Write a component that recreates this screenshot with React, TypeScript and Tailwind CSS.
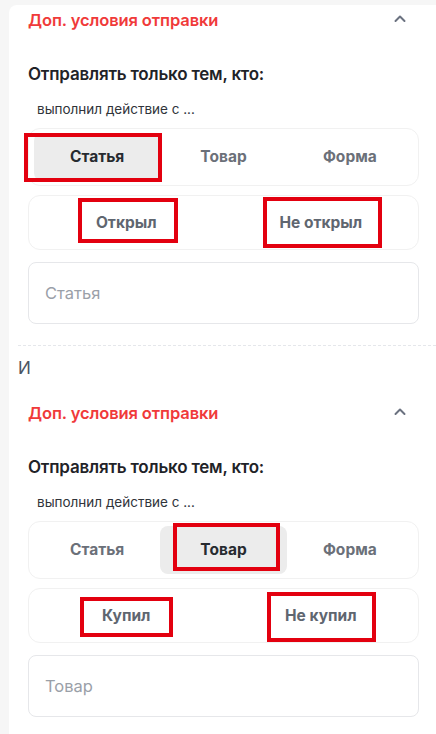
import React from "react";

const font = { fontFamily: "Inter, 'Noto Sans', sans-serif" };

function Chevron() {
  return (
    <svg width="14" height="14" viewBox="0 0 14 14" fill="none">
      <path d="M2.5 9 L7 4.5 L11.5 9" stroke="#6b7280" strokeWidth="2" strokeLinecap="round" strokeLinejoin="round" />
    </svg>
  );
}

type Box = { left: number; top: number; w: number; h: number };

function RedBox({ b }: { b: Box }) {
  return (
    <div
      className="absolute border-[4px] border-[#e3000f] pointer-events-none"
      style={{ left: b.left, top: b.top, width: b.w, height: b.h }}
    />
  );
}

function Section({
  selected,
  actions,
  placeholder,
  tabBox,
  actBoxes,
}: {
  selected: number;
  actions: [string, string];
  placeholder: string;
  tabBox: Box;
  actBoxes: [Box, Box];
}) {
  const tabs = ["Статья", "Товар", "Форма"];
  return (
    <div className="pl-[19px] pr-[17px]">
      <div className="h-[30px] flex items-center justify-between">
        <span className="text-[16.5px] font-semibold text-[#f03a3a] tracking-[-0.1px]">Доп. условия отправки</span>
        <span className="mr-[12px] mt-[-2px]">
          <Chevron />
        </span>
      </div>
      <div className="mt-[28px] leading-[22px] text-[17px] font-semibold text-[#1f2328] tracking-[-0.2px]">
        Отправлять только тем, кто:
      </div>
      <div className="mt-[15px] pl-[9px] leading-[18px] text-[13.5px] text-[#30343a]">выполнил действие с ...</div>
      <div className="relative mt-[10px] h-[58px] rounded-xl border border-[#f1f1f1] grid grid-cols-3 px-[5px] py-[4px]">
        {tabs.map((t, i) => (
          <div
            key={t}
            className={
              "flex items-center justify-center rounded-lg text-[15.5px] font-bold " +
              (i === selected ? "bg-[#ececec] text-[#272b30]" : "text-[#6b7079]")
            }
          >
            {t}
          </div>
        ))}
        <RedBox b={tabBox} />
      </div>
      <div className="relative mt-[9px] h-[55px] rounded-xl border border-[#f1f1f1] grid grid-cols-2">
        {actions.map((a) => (
          <div key={a} className="flex items-center justify-center text-[15.5px] font-bold text-[#5f6670]">
            {a}
          </div>
        ))}
        <RedBox b={actBoxes[0]} />
        <RedBox b={actBoxes[1]} />
      </div>
      <div className="mt-[12px] h-[62px] rounded-lg border border-[#e6e7ea] flex items-center pl-[16px] text-[16.5px] text-[#9aa0a8]">
        {placeholder}
      </div>
    </div>
  );
}

export default function App() {
  return (
    <div className="min-h-screen bg-[#f6f6f6] pl-[9px] pt-[5px]" style={font}>
      <div className="bg-white rounded-tl-lg min-h-[729px]">
        <Section
          selected={0}
          actions={["Открыл", "Не открыл"]}
          placeholder="Статья"
          tabBox={{ left: -5, top: 4, w: 138, h: 49 }}
          actBoxes={[
            { left: 49, top: 2, w: 100, h: 45 },
            { left: 234, top: 1, w: 119, h: 51 },
          ]}
        />
        <div className="mt-[21px] ml-[9px] border-t border-dashed border-[#e5e7eb]" />
        <div className="mt-[10px] ml-[9px] leading-[24px] text-[17px] text-[#4b5563]">И</div>
        <div className="mt-[18px]">
          <Section
            selected={1}
            actions={["Купил", "Не купил"]}
            placeholder="Товар"
            tabBox={{ left: 144, top: 1, w: 107, h: 48 }}
            actBoxes={[
              { left: 51, top: 8, w: 93, h: 40 },
              { left: 238, top: 3, w: 109, h: 50 },
            ]}
          />
        </div>
      </div>
    </div>
  );
}
